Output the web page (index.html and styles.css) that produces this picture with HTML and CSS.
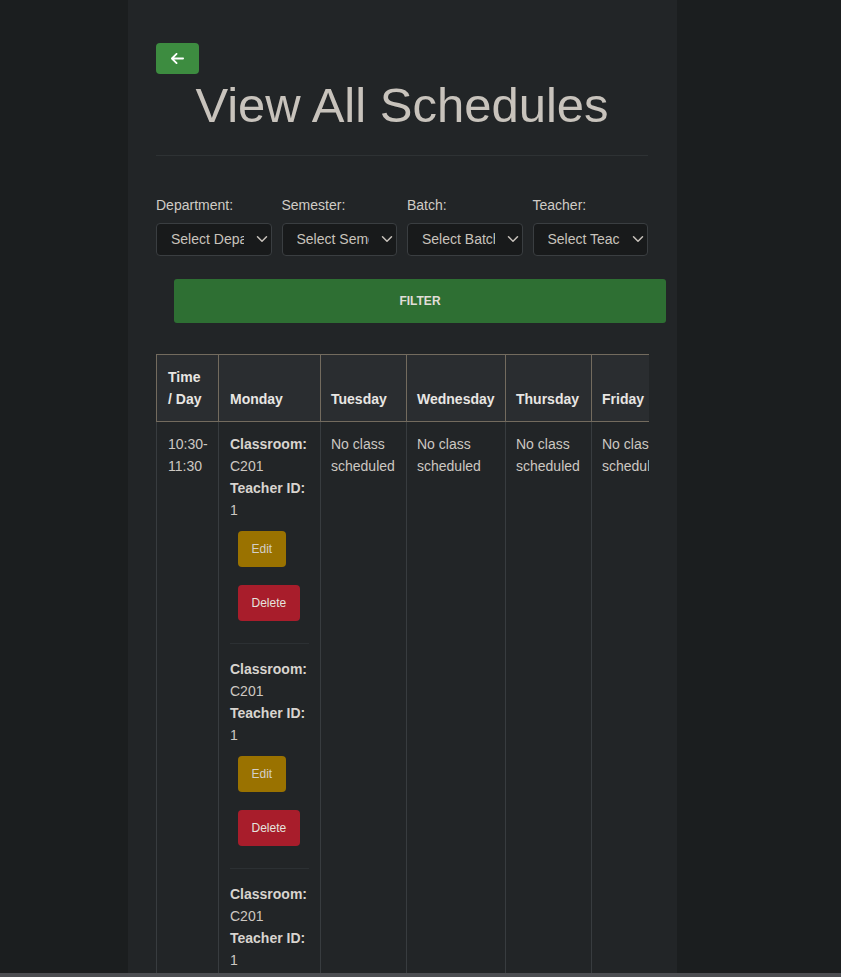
FILE: index.html
```html
<!DOCTYPE html>
<html lang="en">
<head>
<meta charset="utf-8">
<title>View All Schedules</title>
<link rel="stylesheet" href="styles.css">
</head>
<body>
<main class="container">
  <button class="back-btn" type="button" aria-label="Back">
    <svg class="back-icon" viewBox="0 0 448 512" width="13" height="15" aria-hidden="true"><path fill="#ffffff" d="M9.4 233.4c-12.5 12.5-12.5 32.8 0 45.3l160 160c12.5 12.5 32.8 12.5 45.3 0s12.5-32.8 0-45.3L109.2 288 416 288c17.7 0 32-14.3 32-32s-14.3-32-32-32l-306.7 0L214.6 118.6c12.5-12.5 12.5-32.8 0-45.3s-32.8-12.5-45.3 0l-160 160z"/></svg>
  </button>
  <h1 class="title">View All Schedules</h1>
  <hr class="divider">

  <form class="filters">
    <div class="field">
      <label class="field-label" for="dep">Department:</label>
      <div class="select-wrap">
        <select id="dep" class="select"><option>Select Department</option></select>
        <svg class="chev" viewBox="0 0 16 16" width="12" height="12" aria-hidden="true"><path d="M2 5l6 6 6-6" fill="none" stroke="#c8c3bc" stroke-width="2" stroke-linecap="round" stroke-linejoin="round"/></svg>
      </div>
    </div>
    <div class="field">
      <label class="field-label" for="sem">Semester:</label>
      <div class="select-wrap">
        <select id="sem" class="select"><option>Select Semester</option></select>
        <svg class="chev" viewBox="0 0 16 16" width="12" height="12" aria-hidden="true"><path d="M2 5l6 6 6-6" fill="none" stroke="#c8c3bc" stroke-width="2" stroke-linecap="round" stroke-linejoin="round"/></svg>
      </div>
    </div>
    <div class="field">
      <label class="field-label" for="bat">Batch:</label>
      <div class="select-wrap">
        <select id="bat" class="select"><option>Select Batch</option></select>
        <svg class="chev" viewBox="0 0 16 16" width="12" height="12" aria-hidden="true"><path d="M2 5l6 6 6-6" fill="none" stroke="#c8c3bc" stroke-width="2" stroke-linecap="round" stroke-linejoin="round"/></svg>
      </div>
    </div>
    <div class="field">
      <label class="field-label" for="tea">Teacher:</label>
      <div class="select-wrap">
        <select id="tea" class="select"><option>Select Teacher</option></select>
        <svg class="chev" viewBox="0 0 16 16" width="12" height="12" aria-hidden="true"><path d="M2 5l6 6 6-6" fill="none" stroke="#c8c3bc" stroke-width="2" stroke-linecap="round" stroke-linejoin="round"/></svg>
      </div>
    </div>
    <button class="filter-btn" type="button">FILTER</button>
  </form>

  <div class="table-wrap">
    <table class="schedule">
      <colgroup>
        <col class="c-time">
        <col class="c-mon">
        <col class="c-tue">
        <col class="c-wed">
        <col class="c-thu">
        <col class="c-fri">
      </colgroup>
      <thead>
        <tr>
          <th>Time / Day</th>
          <th>Monday</th>
          <th>Tuesday</th>
          <th>Wednesday</th>
          <th>Thursday</th>
          <th>Friday</th>
        </tr>
      </thead>
      <tbody>
        <tr>
          <td>10:30-11:30</td>
          <td>
            <div class="entry">
              <strong>Classroom:</strong> C201<br>
              <strong>Teacher ID:</strong> 1
              <button class="btn btn-edit" type="button">Edit</button>
              <button class="btn btn-delete" type="button">Delete</button>
            </div>
            <div class="entry">
              <strong>Classroom:</strong> C201<br>
              <strong>Teacher ID:</strong> 1
              <button class="btn btn-edit" type="button">Edit</button>
              <button class="btn btn-delete" type="button">Delete</button>
            </div>
            <div class="entry">
              <strong>Classroom:</strong> C201<br>
              <strong>Teacher ID:</strong> 1
              <button class="btn btn-edit" type="button">Edit</button>
              <button class="btn btn-delete" type="button">Delete</button>
            </div>
          </td>
          <td>No class scheduled</td>
          <td>No class scheduled</td>
          <td>No class scheduled</td>
          <td>No class scheduled</td>
        </tr>
      </tbody>
    </table>
  </div>
</main>
<div class="hscroll" aria-hidden="true"></div>
</body>
</html>
```

FILE: styles.css
```css
html, body {
  margin: 0;
  padding: 0;
}
body {
  background: #1b1e1f;
  font-family: "Liberation Sans", Arial, sans-serif;
  font-size: 14px;
  line-height: 22px;
  color: #cdc8c2;
  height: 977px;
  overflow: hidden;
}
.container {
  box-sizing: border-box;
  width: 549px;
  margin-left: 128px;
  min-height: 977px;
  background: #222527;
  padding: 43px 29px 0 28px;
}
.back-btn {
  display: flex;
  align-items: center;
  justify-content: center;
  width: 43px;
  height: 31px;
  padding: 0;
  border: 0;
  border-radius: 4px;
  background: #3d8c40;
  margin: 0 0 3px 0;
}
.back-icon {
  display: block;
  margin-right: 1px;
}
.title {
  margin: 0;
  font-size: 49px;
  line-height: 57.6px;
  font-weight: 400;
  color: #c8c3bc;
  text-align: center;
}
.divider {
  margin: 20px 0 0 0;
  border: 0;
  border-top: 1px solid #2e3234;
  height: 0;
}
.filters {
  display: grid;
  grid-template-columns: repeat(4, 1fr);
  column-gap: 10px;
  margin-top: 39px;
}
.field {
  display: flex;
  flex-direction: column;
  min-width: 0;
}
.field-label {
  color: #d0ccc6;
  font-size: 14px;
  line-height: 20px;
  margin-bottom: 8px;
}
.select-wrap {
  position: relative;
}
.select {
  -webkit-appearance: none;
  appearance: none;
  box-sizing: border-box;
  width: 100%;
  height: 33px;
  background: #181a1b;
  border: 1px solid #3a3e41;
  border-radius: 4px;
  color: #c8c3bc;
  font-family: "Liberation Sans", Arial, sans-serif;
  font-size: 14px;
  padding: 0 27px 0 14px;
  margin: 0;
}
.chev {
  position: absolute;
  right: 4px;
  top: 10px;
  pointer-events: none;
}
.filter-btn {
  grid-column: 1 / -1;
  box-sizing: border-box;
  width: 100%;
  height: 44px;
  margin: 23px 0 0 18px;
  border: 0;
  border-radius: 3px;
  background: #2e6f33;
  color: #e0ddd8;
  font-family: "Liberation Sans", Arial, sans-serif;
  font-size: 12px;
  font-weight: 700;
  letter-spacing: 0;
}
.table-wrap {
  margin-top: 31px;
  width: 493px;
  overflow: hidden;
}
.schedule {
  border-collapse: collapse;
  table-layout: fixed;
  width: 521px;
}
.c-time { width: 62px; }
.c-mon { width: 102px; }
.c-tue { width: 86px; }
.c-wed { width: 99px; }
.c-thu { width: 86px; }
.c-fri { width: 86px; }
.schedule th {
  background: #2a2d30;
  color: #e8e6e3;
  font-weight: 700;
  text-align: left;
  vertical-align: bottom;
  padding: 11px 11px;
  border: 1px solid #736b5e;
  overflow: hidden;
}
.schedule td {
  vertical-align: top;
  padding: 11px 11px;
  border: 1px solid #383c3f;
  color: #cdc8c2;
}
.schedule th:nth-child(n+3),
.schedule td:nth-child(n+3) {
  padding-left: 10px;
}
.entry {
  padding-bottom: 22px;
  border-bottom: 1px solid #2c3033;
  margin-bottom: 14px;
}
.entry strong {
  color: #d8d4cf;
}
.btn {
  display: block;
  height: 36px;
  padding: 0 13.5px;
  margin-left: 8px;
  border: 0;
  border-radius: 4px;
  font-family: "Liberation Sans", Arial, sans-serif;
  font-size: 12px;
}
.btn-edit {
  margin-top: 10px;
  background: #9a7200;
  color: #d3cfc9;
}
.btn-delete {
  margin-top: 18px;
  background: #a81d2b;
  color: #e5e3df;
}
.hscroll {
  position: fixed;
  left: 0;
  right: 0;
  bottom: 0;
  height: 4px;
  background: #4c4e52;
}
```
